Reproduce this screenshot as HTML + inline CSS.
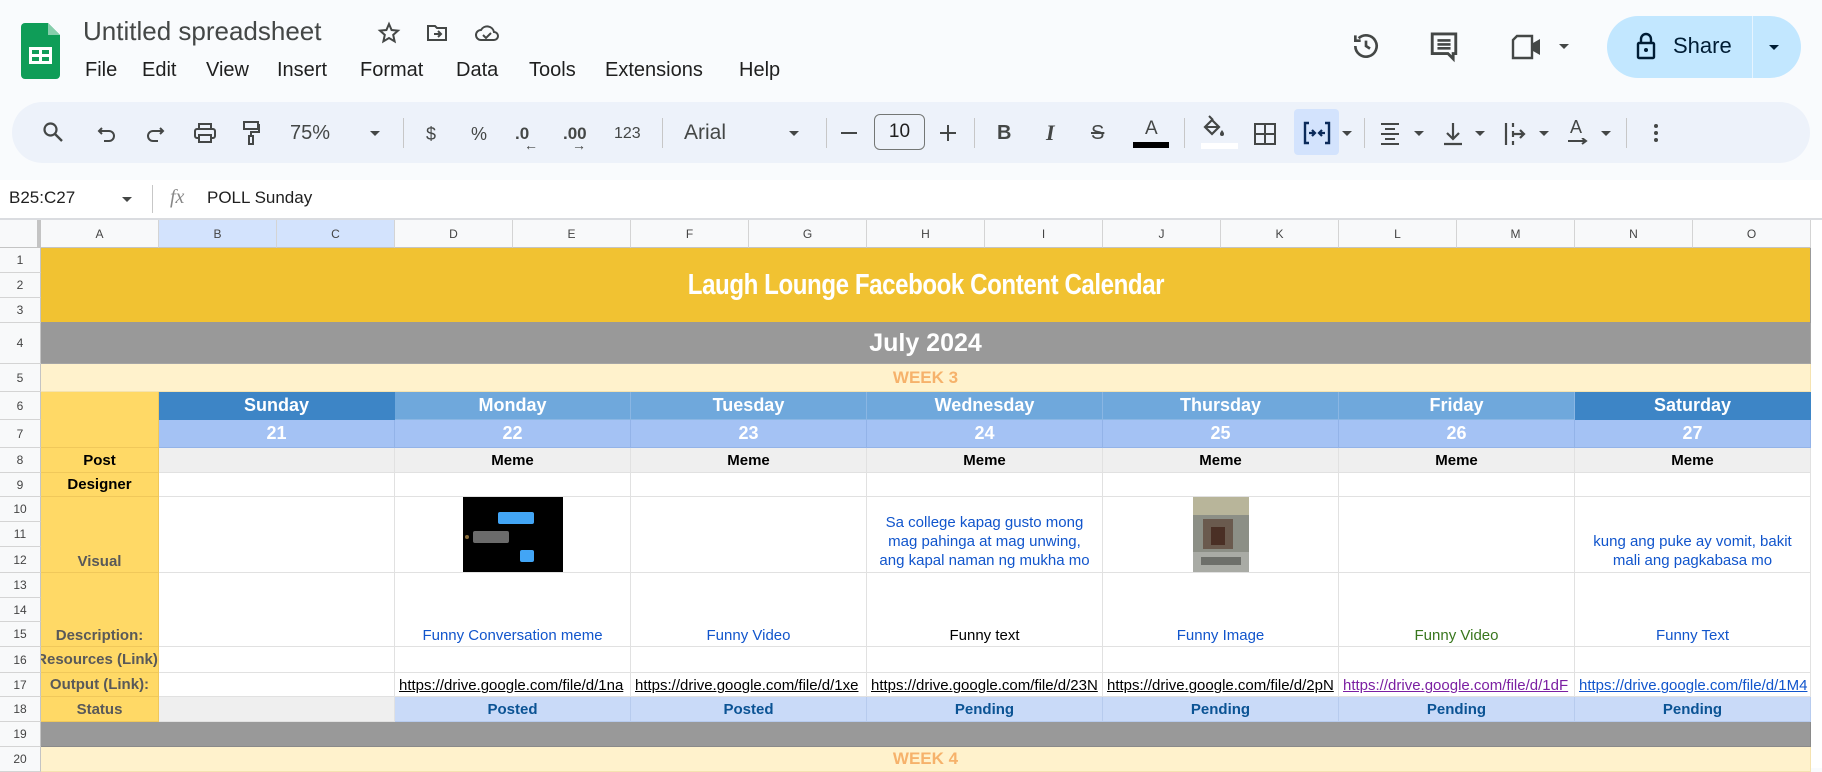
<!DOCTYPE html>
<html><head><meta charset="utf-8"><style>
*{box-sizing:border-box;margin:0;padding:0}
body{width:1822px;height:768px;overflow:hidden;background:#f9fbfd;font-family:"Liberation Sans",Arial,sans-serif;position:relative;color:#1f1f1f}
.a{position:absolute}
.t{position:absolute;white-space:nowrap}
.pill{position:absolute;left:12px;top:102px;width:1798px;height:61px;background:#edf2fa;border-radius:31px}
.ic{position:absolute;color:#444746;font-size:17px;top:124px;white-space:nowrap}
.sep{position:absolute;top:118px;width:1px;height:30px;background:#c7c7c7}
.car{position:absolute;width:0;height:0;border-left:5px solid transparent;border-right:5px solid transparent;border-top:5px solid #444746}
.grid{position:absolute;left:0;top:180px;width:1822px;height:588px;background:#fff}
.c{position:absolute;display:flex;justify-content:center;align-items:center;overflow:hidden;white-space:nowrap;border-right:1px solid #e1e1e1;border-bottom:1px solid #e1e1e1;font-size:15px;background:#fff}
.ch{position:absolute;top:220px;height:28px;background:#f8f9fa;border-right:1px solid #d4d4d4;border-bottom:1px solid #c4c4c4;font-size:12px;color:#444;display:flex;align-items:center;justify-content:center}
.rh{position:absolute;left:0;width:41px;background:#f8f9fa;border-right:1px solid #c4c4c4;border-bottom:1px solid #d4d4d4;font-size:12px;color:#444;display:flex;align-items:center;justify-content:center}
.lab{background:#ffd966;font-weight:bold;color:#595959;border-color:#f0c85a}
.day{color:#fff;font-weight:bold;font-size:18px;background:#6fa8dc;border-color:#8ab6e3}
.num{color:#fff;font-weight:bold;font-size:18px;background:#a4c2f4;border-color:#93b3e8}
.meme{background:#efefef;font-weight:bold;color:#000}
.st{background:#c9daf8;font-weight:bold;color:#0b5394;border-color:#b7cbee}
.lk{justify-content:flex-start;padding-left:4px;text-decoration:underline;align-items:flex-end;padding-bottom:2px}
.bt{align-items:flex-end;padding-bottom:2px}
.wr{white-space:normal;text-align:center;line-height:19px;color:#1155cc;padding:0 8px}
</style></head><body>
<svg class="a" style="left:21px;top:23px" width="39" height="56" viewBox="0 0 39 56"><path d="M4 0h23l12 12v40a4 4 0 0 1-4 4H4a4 4 0 0 1-4-4V4a4 4 0 0 1 4-4z" fill="#0f9d58"/><path d="M27 0v12h12z" fill="#87ceac"/><rect x="8" y="24" width="23" height="17" fill="#fff"/><rect x="11" y="27" width="7" height="4" fill="#0f9d58"/><rect x="21" y="27" width="7" height="4" fill="#0f9d58"/><rect x="11" y="34" width="7" height="4" fill="#0f9d58"/><rect x="21" y="34" width="7" height="4" fill="#0f9d58"/></svg>
<div class="t" style="left:83px;top:16px;font-size:26px;color:#444746">Untitled spreadsheet</div>
<svg class="a" style="left:377px;top:21px" width="24" height="24" viewBox="0 0 24 24"><path d="M12 3l2.6 6 6.4.6-4.8 4.3 1.4 6.4L12 17l-5.6 3.3 1.4-6.4L3 9.6 9.4 9z" fill="none" stroke="#444746" stroke-width="2"/></svg>
<svg class="a" style="left:425px;top:21px" width="24" height="24" viewBox="0 0 24 24"><path d="M3 5h7l2 2h9v12H3z" fill="none" stroke="#444746" stroke-width="2"/><path d="M9 13h7m-3-3l3 3-3 3" fill="none" stroke="#444746" stroke-width="2"/></svg>
<svg class="a" style="left:474px;top:21px" width="26" height="24" viewBox="0 0 26 24"><path d="M7 19a5 5 0 0 1 0-10 7 7 0 0 1 13 2 4 4 0 0 1 0 8z" fill="none" stroke="#444746" stroke-width="2"/><path d="M9 14l3 3 5-5" fill="none" stroke="#444746" stroke-width="2"/></svg>
<div class="t" style="left:85px;top:59px;font-size:20px">File</div>
<div class="t" style="left:142px;top:59px;font-size:20px">Edit</div>
<div class="t" style="left:206px;top:59px;font-size:20px">View</div>
<div class="t" style="left:277px;top:59px;font-size:20px">Insert</div>
<div class="t" style="left:360px;top:59px;font-size:20px">Format</div>
<div class="t" style="left:456px;top:59px;font-size:20px">Data</div>
<div class="t" style="left:529px;top:59px;font-size:20px">Tools</div>
<div class="t" style="left:605px;top:59px;font-size:20px">Extensions</div>
<div class="t" style="left:739px;top:59px;font-size:20px">Help</div>
<svg class="a" style="left:1350px;top:30px" width="32" height="32" viewBox="0 0 24 24"><path d="M4 12a8 8 0 1 0 2.5-5.8M4 4v4h4" fill="none" stroke="#444746" stroke-width="2"/><path d="M12 8v4l3 2" fill="none" stroke="#444746" stroke-width="2"/></svg>
<svg class="a" style="left:1428px;top:30px" width="32" height="34" viewBox="0 0 24 26"><path d="M3 3h18v15h-2v4l-4-4H3z" fill="none" stroke="#444746" stroke-width="2.2"/><path d="M7 8h10M7 11h10M7 14h10" stroke="#444746" stroke-width="2"/></svg>
<svg class="a" style="left:1510px;top:33px" width="34" height="28" viewBox="0 0 34 28"><path d="M7 3h15v22H3V7z" fill="none" stroke="#444746" stroke-width="2.4"/><path d="M23 10l7-4v16l-7-4" fill="#444746"/></svg>
<div class="car" style="left:1559px;top:44px"></div>
<div class="a" style="left:1607px;top:16px;width:194px;height:62px;background:#c2e7ff;border-radius:31px"></div>
<div class="a" style="left:1752px;top:16px;width:1px;height:62px;background:#e6f4ff"></div>
<svg class="a" style="left:1636px;top:32px" width="20" height="28" viewBox="0 0 20 28"><rect x="2" y="11" width="16" height="15" rx="1" fill="none" stroke="#001d35" stroke-width="2.4"/><path d="M5 11V7a5 5 0 0 1 10 0v4" fill="none" stroke="#001d35" stroke-width="2.4"/><circle cx="10" cy="18" r="2" fill="#001d35"/></svg>
<div class="t" style="left:1673px;top:33px;font-size:22px;color:#001d35">Share</div>
<div class="car" style="left:1769px;top:45px;border-top-color:#001d35"></div>

<div class="pill"></div>
<svg class="a" style="left:42px;top:121px" width="22" height="22" viewBox="0 0 22 22"><circle cx="8.5" cy="8.5" r="6" fill="none" stroke="#444746" stroke-width="2.2"/><path d="M13 13l7 7" stroke="#444746" stroke-width="2.4"/></svg>
<svg class="a" style="left:97px;top:124px" width="20" height="20" viewBox="0 0 20 20"><path d="M5 4L2 7l3 3M2 7h10a5 5 0 0 1 0 10H7" fill="none" stroke="#444746" stroke-width="2"/></svg>
<svg class="a" style="left:145px;top:124px" width="20" height="20" viewBox="0 0 20 20"><path d="M15 4l3 3-3 3M18 7H8a5 5 0 0 0 0 10h5" fill="none" stroke="#444746" stroke-width="2"/></svg>
<svg class="a" style="left:193px;top:122px" width="24" height="22" viewBox="0 0 24 22"><rect x="6" y="2" width="12" height="5" fill="none" stroke="#444746" stroke-width="2"/><rect x="2" y="7" width="20" height="9" rx="2" fill="none" stroke="#444746" stroke-width="2"/><rect x="6" y="13" width="12" height="7" fill="#edf2fa" stroke="#444746" stroke-width="2"/></svg>
<svg class="a" style="left:241px;top:120px" width="20" height="26" viewBox="0 0 20 26"><rect x="3" y="2" width="14" height="7" fill="none" stroke="#444746" stroke-width="2"/><path d="M17 5h1v7H10v4" fill="none" stroke="#444746" stroke-width="2"/><rect x="8" y="16" width="4" height="8" fill="none" stroke="#444746" stroke-width="2"/></svg>
<div class="ic" style="left:290px;top:122px;font-size:20px">75%</div>
<div class="car" style="left:370px;top:131px"></div>
<div class="sep" style="left:403px"></div>
<div class="ic" style="left:426px;font-size:18px">$</div>
<div class="ic" style="left:471px;font-size:18px">%</div>
<div class="ic" style="left:515px;font-size:17px;font-weight:bold">.0</div>
<div class="ic" style="left:524px;top:137px;font-size:14px">←</div>
<div class="ic" style="left:563px;font-size:17px;font-weight:bold">.00</div>
<div class="ic" style="left:572px;top:137px;font-size:14px">→</div>
<div class="ic" style="left:614px;font-size:16px;top:125px">123</div>
<div class="sep" style="left:662px"></div>
<div class="ic" style="left:684px;font-size:21px;top:121px">Arial</div>
<div class="car" style="left:789px;top:131px"></div>
<div class="sep" style="left:826px"></div>
<div class="a" style="left:841px;top:132px;width:16px;height:2px;background:#444746"></div>
<div class="a" style="left:874px;top:114px;width:51px;height:36px;border:1px solid #747775;border-radius:6px;font-size:19px;color:#1f1f1f;text-align:center;line-height:34px">10</div>
<div class="a" style="left:940px;top:132px;width:16px;height:2px;background:#444746"></div>
<div class="a" style="left:947px;top:125px;width:2px;height:16px;background:#444746"></div>
<div class="sep" style="left:974px"></div>
<div class="ic" style="left:997px;font-size:20px;font-weight:bold;top:122px">B</div>
<div class="ic" style="left:1046px;font-size:22px;font-weight:bold;font-style:italic;font-family:'Liberation Serif',serif;top:120px">I</div>
<div class="ic" style="left:1091px;font-size:20px;top:122px;text-decoration:line-through">S</div>
<div class="ic" style="left:1145px;font-size:19px;top:118px">A</div>
<div class="a" style="left:1133px;top:142px;width:36px;height:6px;background:#000"></div>
<div class="sep" style="left:1184px"></div>
<svg class="a" style="left:1200px;top:115px" width="26" height="24" viewBox="0 0 26 24"><path d="M5 12l7-7 7 7-7 7z" fill="none" stroke="#444746" stroke-width="2.2"/><path d="M5 12h14" stroke="#444746" stroke-width="2"/><path d="M22 15c1.5 2 2 3 2 4a2 2 0 0 1-4 0c0-1 .5-2 2-4z" fill="#444746"/><path d="M9 1l4 4" stroke="#444746" stroke-width="2"/></svg>
<div class="a" style="left:1201px;top:143px;width:37px;height:6px;background:#fff"></div>
<svg class="a" style="left:1253px;top:122px" width="24" height="24" viewBox="0 0 24 24"><rect x="2" y="2" width="20" height="20" fill="none" stroke="#444746" stroke-width="2"/><path d="M12 2v20M2 12h20" stroke="#444746" stroke-width="2"/></svg>
<div class="a" style="left:1294px;top:109px;width:45px;height:46px;background:#d3e3fd;border-radius:4px"></div>
<svg class="a" style="left:1303px;top:121px" width="28" height="24" viewBox="0 0 28 24"><path d="M6 2H2v20h4M22 2h4v20h-4" fill="none" stroke="#0b2a5a" stroke-width="2.4"/><path d="M6 12h6m-3-3l3 3-3 3M22 12h-6m3-3l-3 3 3 3" fill="none" stroke="#0b2a5a" stroke-width="2.2"/></svg>
<div class="car" style="left:1342px;top:131px"></div>
<div class="sep" style="left:1364px"></div>
<svg class="a" style="left:1378px;top:121px" width="24" height="24" viewBox="0 0 24 24"><path d="M3 3h18M7 8h10M3 13h18M7 18h10M3 23h18" stroke="#444746" stroke-width="2"/></svg>
<div class="car" style="left:1414px;top:131px"></div>
<svg class="a" style="left:1441px;top:121px" width="24" height="26" viewBox="0 0 24 26"><path d="M12 2v16m-6-6l6 6 6-6M3 23h18" fill="none" stroke="#444746" stroke-width="2.2"/></svg>
<div class="car" style="left:1475px;top:131px"></div>
<svg class="a" style="left:1503px;top:121px" width="24" height="26" viewBox="0 0 24 26"><path d="M3 2v22M10 2v4m0 4v6m0 4v4M10 13h11m-4-4l4 4-4 4" fill="none" stroke="#444746" stroke-width="2.2"/></svg>
<div class="car" style="left:1539px;top:131px"></div>
<div class="ic" style="left:1570px;font-size:18px;top:117px">A</div>
<svg class="a" style="left:1566px;top:138px" width="24" height="10" viewBox="0 0 24 10"><path d="M2 3h18m-4-3l4 3-4 3" fill="none" stroke="#444746" stroke-width="2"/></svg>
<div class="car" style="left:1601px;top:131px"></div>
<div class="sep" style="left:1626px"></div>
<div class="a" style="left:1654px;top:124px;width:4px;height:4px;border-radius:2px;background:#444746;box-shadow:0 7px 0 #444746,0 14px 0 #444746"></div>

<div class="grid"></div>
<div class="t" style="left:9px;top:188px;font-size:17px;color:#1f1f1f">B25:C27</div>
<div class="car" style="left:122px;top:197px"></div>
<div class="a" style="left:152px;top:185px;width:1px;height:28px;background:#c7c7c7"></div>
<div class="t" style="left:170px;top:186px;font-size:20px;font-style:italic;font-family:'Liberation Serif',serif;color:#888">fx</div>
<div class="t" style="left:207px;top:188px;font-size:17px">POLL Sunday</div>

<div class="a" style="left:0;top:218px;width:1822px;height:2px;background:#dadce0"></div>
<div class="ch" style="left:0;width:41px;border-right:4px solid #c4c4c4"></div>
<div class="ch" style="left:41px;width:118px">A</div>
<div class="ch" style="left:159px;width:118px;background:#d3e3fd">B</div>
<div class="ch" style="left:277px;width:118px;background:#d3e3fd">C</div>
<div class="ch" style="left:395px;width:118px">D</div>
<div class="ch" style="left:513px;width:118px">E</div>
<div class="ch" style="left:631px;width:118px">F</div>
<div class="ch" style="left:749px;width:118px">G</div>
<div class="ch" style="left:867px;width:118px">H</div>
<div class="ch" style="left:985px;width:118px">I</div>
<div class="ch" style="left:1103px;width:118px">J</div>
<div class="ch" style="left:1221px;width:118px">K</div>
<div class="ch" style="left:1339px;width:118px">L</div>
<div class="ch" style="left:1457px;width:118px">M</div>
<div class="ch" style="left:1575px;width:118px">N</div>
<div class="ch" style="left:1693px;width:118px">O</div>
<div class="ch" style="left:1811px;width:11px;background:#fff;border:none"></div>

<div class="rh" style="top:248px;height:25px">1</div>
<div class="rh" style="top:273px;height:25px">2</div>
<div class="rh" style="top:298px;height:25px">3</div>
<div class="rh" style="top:323px;height:41px">4</div>
<div class="rh" style="top:364px;height:28px">5</div>
<div class="rh" style="top:392px;height:28px">6</div>
<div class="rh" style="top:420px;height:28px">7</div>
<div class="rh" style="top:448px;height:25px">8</div>
<div class="rh" style="top:473px;height:24px">9</div>
<div class="rh" style="top:497px;height:25px">10</div>
<div class="rh" style="top:522px;height:25px">11</div>
<div class="rh" style="top:547px;height:26px">12</div>
<div class="rh" style="top:573px;height:25px">13</div>
<div class="rh" style="top:598px;height:24px">14</div>
<div class="rh" style="top:622px;height:25px">15</div>
<div class="rh" style="top:647px;height:26px">16</div>
<div class="rh" style="top:673px;height:24px">17</div>
<div class="rh" style="top:697px;height:25px">18</div>
<div class="rh" style="top:722px;height:25px">19</div>
<div class="rh" style="top:747px;height:25px">20</div>

<div class="c" style="left:41px;top:248px;width:1770px;height:75px;background:#f1c232;border-color:#999;color:#fff;font-weight:bold;font-size:29px"><span style="display:inline-block;transform:scaleX(0.83);letter-spacing:-0.5px">Laugh Lounge Facebook Content Calendar</span></div>
<div class="c" style="left:41px;top:323px;width:1770px;height:41px;background:#999999;border-color:#a5a5a5;color:#fff;font-weight:bold;font-size:25px">July 2024</div>
<div class="c" style="left:41px;top:364px;width:1770px;height:28px;background:#fff2cc;border-color:#f5e3b0;color:#f6b26b;font-weight:bold;font-size:17px">WEEK 3</div>

<div class="c lab" style="left:41px;top:392px;width:118px;height:56px"></div>
<div class="c lab" style="left:41px;top:448px;width:118px;height:25px;color:#000">Post</div>
<div class="c lab" style="left:41px;top:473px;width:118px;height:24px;color:#000">Designer</div>
<div class="c lab bt" style="left:41px;top:497px;width:118px;height:76px">Visual</div>
<div class="c lab bt" style="left:41px;top:573px;width:118px;height:74px">Description:</div>
<div class="c lab" style="left:41px;top:647px;width:118px;height:26px">Resources (Link):</div>
<div class="c lab" style="left:41px;top:673px;width:118px;height:24px">Output (Link):</div>
<div class="c lab" style="left:41px;top:697px;width:118px;height:25px">Status</div>

<div class="c day" style="left:159px;top:392px;width:236px;height:28px;background:#3d85c6;border-color:#3d85c6">Sunday</div>
<div class="c day" style="left:395px;top:392px;width:236px;height:28px">Monday</div>
<div class="c day" style="left:631px;top:392px;width:236px;height:28px">Tuesday</div>
<div class="c day" style="left:867px;top:392px;width:236px;height:28px">Wednesday</div>
<div class="c day" style="left:1103px;top:392px;width:236px;height:28px">Thursday</div>
<div class="c day" style="left:1339px;top:392px;width:236px;height:28px">Friday</div>
<div class="c day" style="left:1575px;top:392px;width:236px;height:28px;background:#3d85c6;border-color:#3d85c6">Saturday</div>

<div class="c num" style="left:159px;top:420px;width:236px;height:28px">21</div>
<div class="c num" style="left:395px;top:420px;width:236px;height:28px">22</div>
<div class="c num" style="left:631px;top:420px;width:236px;height:28px">23</div>
<div class="c num" style="left:867px;top:420px;width:236px;height:28px">24</div>
<div class="c num" style="left:1103px;top:420px;width:236px;height:28px">25</div>
<div class="c num" style="left:1339px;top:420px;width:236px;height:28px">26</div>
<div class="c num" style="left:1575px;top:420px;width:236px;height:28px">27</div>

<div class="c meme" style="left:159px;top:448px;width:236px;height:25px"></div>
<div class="c meme" style="left:395px;top:448px;width:236px;height:25px">Meme</div>
<div class="c meme" style="left:631px;top:448px;width:236px;height:25px">Meme</div>
<div class="c meme" style="left:867px;top:448px;width:236px;height:25px">Meme</div>
<div class="c meme" style="left:1103px;top:448px;width:236px;height:25px">Meme</div>
<div class="c meme" style="left:1339px;top:448px;width:236px;height:25px">Meme</div>
<div class="c meme" style="left:1575px;top:448px;width:236px;height:25px">Meme</div>

<div class="c" style="left:159px;top:473px;width:236px;height:24px"></div>
<div class="c" style="left:395px;top:473px;width:236px;height:24px"></div>
<div class="c" style="left:631px;top:473px;width:236px;height:24px"></div>
<div class="c" style="left:867px;top:473px;width:236px;height:24px"></div>
<div class="c" style="left:1103px;top:473px;width:236px;height:24px"></div>
<div class="c" style="left:1339px;top:473px;width:236px;height:24px"></div>
<div class="c" style="left:1575px;top:473px;width:236px;height:24px"></div>

<div class="c" style="left:159px;top:497px;width:236px;height:76px"></div>
<div class="c" style="left:395px;top:497px;width:236px;height:76px">
<svg width="100" height="75" viewBox="0 0 100 75"><rect width="100" height="75" fill="#000"/><rect x="35" y="15" width="36" height="12" rx="2" fill="#42a5f5"/><rect x="10" y="34" width="36" height="12" rx="2" fill="#6b6b6b"/><circle cx="4" cy="40" r="2" fill="#8a6d3b"/><rect x="57" y="53" width="14" height="12" rx="2" fill="#42a5f5"/></svg></div>
<div class="c" style="left:631px;top:497px;width:236px;height:76px"></div>
<div class="c bt wr" style="left:867px;top:497px;width:236px;height:76px;padding-bottom:2px">Sa college kapag gusto mong mag pahinga at mag unwing, ang kapal naman ng mukha mo</div>
<div class="c" style="left:1103px;top:497px;width:236px;height:76px">
<svg width="56" height="75" viewBox="0 0 56 75"><rect width="56" height="75" fill="#8c8f86"/><rect y="0" width="56" height="18" fill="#b8b59a"/><rect x="10" y="22" width="30" height="30" fill="#6a5a4e"/><rect x="18" y="30" width="14" height="18" fill="#4a2f25"/><rect y="55" width="56" height="20" fill="#a9aba5"/><rect x="8" y="60" width="40" height="8" fill="#6d6f6a"/></svg></div>
<div class="c" style="left:1339px;top:497px;width:236px;height:76px"></div>
<div class="c bt wr" style="left:1575px;top:497px;width:236px;height:76px;padding-bottom:2px">kung ang puke ay vomit, bakit mali ang pagkabasa mo</div>

<div class="c" style="left:159px;top:573px;width:236px;height:74px"></div>
<div class="c bt" style="left:395px;top:573px;width:236px;height:74px;color:#1155cc">Funny Conversation meme</div>
<div class="c bt" style="left:631px;top:573px;width:236px;height:74px;color:#1155cc">Funny Video</div>
<div class="c bt" style="left:867px;top:573px;width:236px;height:74px;color:#000">Funny text</div>
<div class="c bt" style="left:1103px;top:573px;width:236px;height:74px;color:#1155cc">Funny Image</div>
<div class="c bt" style="left:1339px;top:573px;width:236px;height:74px;color:#38761d">Funny Video</div>
<div class="c bt" style="left:1575px;top:573px;width:236px;height:74px;color:#1155cc">Funny Text</div>

<div class="c" style="left:159px;top:647px;width:236px;height:26px"></div>
<div class="c" style="left:395px;top:647px;width:236px;height:26px"></div>
<div class="c" style="left:631px;top:647px;width:236px;height:26px"></div>
<div class="c" style="left:867px;top:647px;width:236px;height:26px"></div>
<div class="c" style="left:1103px;top:647px;width:236px;height:26px"></div>
<div class="c" style="left:1339px;top:647px;width:236px;height:26px"></div>
<div class="c" style="left:1575px;top:647px;width:236px;height:26px"></div>

<div class="c" style="left:159px;top:673px;width:236px;height:24px"></div>
<div class="c lk" style="left:395px;top:673px;width:236px;height:24px;color:#000">https://drive.google.com/file/d/1na</div>
<div class="c lk" style="left:631px;top:673px;width:236px;height:24px;color:#000">https://drive.google.com/file/d/1xe</div>
<div class="c lk" style="left:867px;top:673px;width:236px;height:24px;color:#000">https://drive.google.com/file/d/23N</div>
<div class="c lk" style="left:1103px;top:673px;width:236px;height:24px;color:#000">https://drive.google.com/file/d/2pN</div>
<div class="c lk" style="left:1339px;top:673px;width:236px;height:24px;color:#7b1fa2">https://drive.google.com/file/d/1dF</div>
<div class="c lk" style="left:1575px;top:673px;width:236px;height:24px;color:#1155cc">https://drive.google.com/file/d/1M4</div>

<div class="c" style="left:159px;top:697px;width:236px;height:25px;background:#efefef"></div>
<div class="c st" style="left:395px;top:697px;width:236px;height:25px">Posted</div>
<div class="c st" style="left:631px;top:697px;width:236px;height:25px">Posted</div>
<div class="c st" style="left:867px;top:697px;width:236px;height:25px">Pending</div>
<div class="c st" style="left:1103px;top:697px;width:236px;height:25px">Pending</div>
<div class="c st" style="left:1339px;top:697px;width:236px;height:25px">Pending</div>
<div class="c st" style="left:1575px;top:697px;width:236px;height:25px">Pending</div>

<div class="c" style="left:41px;top:722px;width:1770px;height:25px;background:#999999;border-color:#8a8a8a"></div>
<div class="c" style="left:41px;top:747px;width:1770px;height:25px;background:#fff2cc;border-color:#f5e3b0;color:#f6b26b;font-weight:bold;font-size:17px">WEEK 4</div>
</body></html>
